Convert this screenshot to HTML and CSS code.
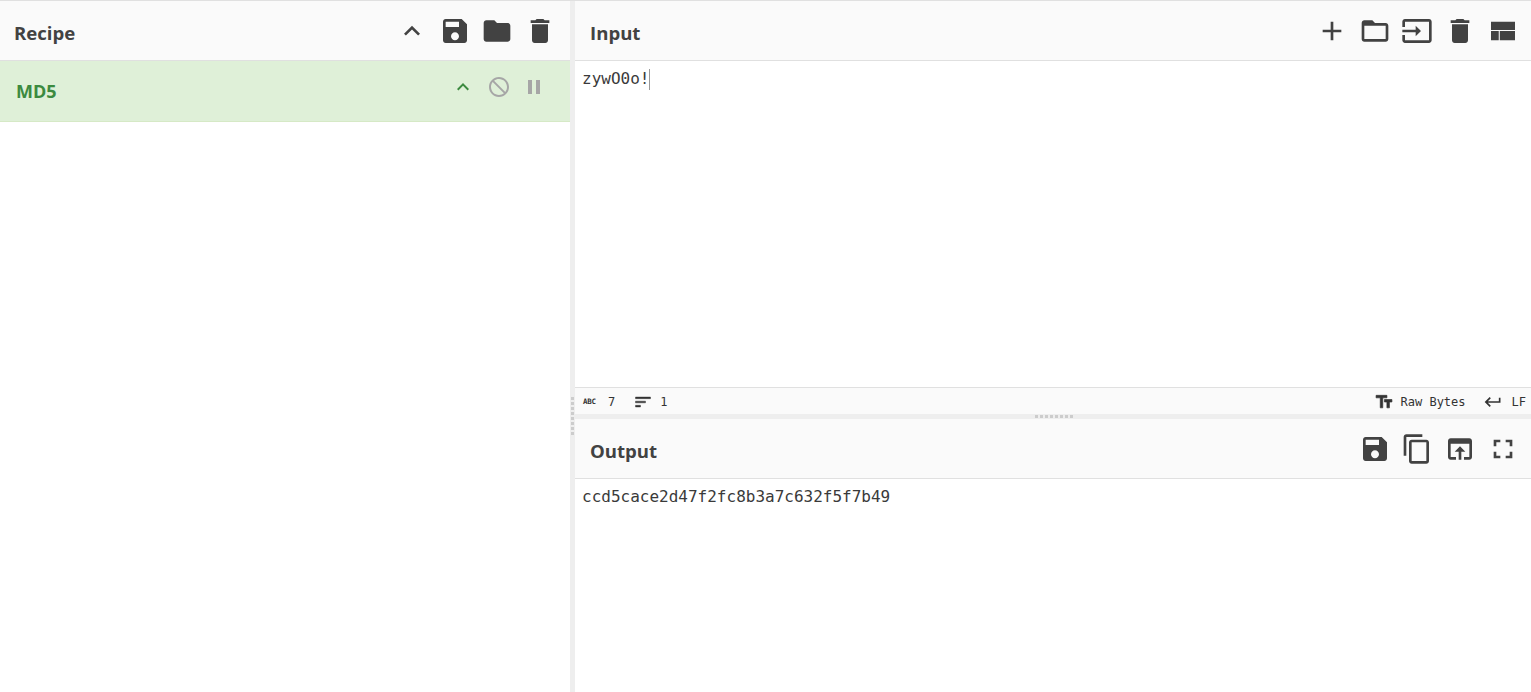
FILE: index.html
```html
<!DOCTYPE html>
<html lang="en">
<head>
<meta charset="utf-8">
<title>CyberChef</title>
<link rel="stylesheet" href="styles.css">
</head>
<body>
<div class="app">
  <section class="recipe">
    <header class="head">
      <h2 class="title">Recipe</h2>
      <div class="tools">
        <svg class="ic" viewBox="0 0 24 24"><path d="M12 8l-6 6 1.41 1.41L12 10.83l4.59 4.58L18 14z"/></svg>
        <svg class="ic" viewBox="0 0 24 24"><path d="M17 3H5c-1.11 0-2 .9-2 2v14c0 1.1.89 2 2 2h14c1.1 0 2-.9 2-2V7l-4-4zm-5 16c-1.66 0-3-1.34-3-3s1.34-3 3-3 3 1.34 3 3-1.34 3-3 3zm3-10H5V5h10v4z"/></svg>
        <svg class="ic" viewBox="0 0 24 24"><path d="M10 4H4c-1.1 0-1.99.9-1.99 2L2 18c0 1.1.9 2 2 2h16c1.1 0 2-.9 2-2V8c0-1.1-.9-2-2-2h-8l-2-2z"/></svg>
        <svg class="ic" viewBox="0 0 24 24"><path d="M6 19c0 1.1.9 2 2 2h8c1.1 0 2-.9 2-2V7H6v12zM19 4h-3.5l-1-1h-5l-1 1H5v2h14V4z"/></svg>
      </div>
    </header>
    <div class="op">
      <span class="op-name">MD5</span>
      <div class="op-tools">
        <svg class="ic-s green" viewBox="0 0 24 24"><path d="M12 8l-6 6 1.41 1.41L12 10.83l4.59 4.58L18 14z"/></svg>
        <svg class="ic-s grey" viewBox="0 0 24 24"><path d="M12 2C6.48 2 2 6.48 2 12s4.48 10 10 10 10-4.48 10-10S17.52 2 12 2zm0 18c-4.42 0-8-3.58-8-8 0-1.85.63-3.55 1.69-4.9L16.9 18.31C15.55 19.37 13.85 20 12 20zm6.31-3.1L7.1 5.69C8.45 4.63 10.15 4 12 4c4.42 0 8 3.58 8 8 0 1.85-.63 3.55-1.69 4.9z"/></svg>
        <svg class="ic-s grey" viewBox="0 0 24 24"><path d="M6 19h4V5H6v14zm8-14v14h4V5h-4z"/></svg>
      </div>
    </div>
  </section>

  <div class="gutter-v"><span class="grip-v"></span></div>

  <main class="io">
    <section class="input">
      <header class="head">
        <h2 class="title title-io">Input</h2>
        <div class="tools tools-io">
          <svg class="ic" viewBox="0 0 24 24"><path d="M19 13h-6v6h-2v-6H5v-2h6V5h2v6h6v2z"/></svg>
          <svg class="ic" viewBox="0 0 24 24"><path d="M20 6h-8l-2-2H4c-1.1 0-1.99.9-1.99 2L2 18c0 1.1.9 2 2 2h16c1.1 0 2-.9 2-2V8c0-1.1-.9-2-2-2zm0 12H4V8h16v10z"/></svg>
          <svg class="ic" viewBox="0 0 24 24"><path d="M21 3.01H3c-1.1 0-2 .9-2 2V9h2V4.99h18v14.03H3V15H1v4.01c0 1.1.9 1.98 2 1.98h18c1.1 0 2-.88 2-1.98v-14c0-1.11-.9-2-2-2zM11 16l4-4-4-4v3H1v2h10v3z"/></svg>
          <svg class="ic" viewBox="0 0 24 24"><path d="M6 19c0 1.1.9 2 2 2h8c1.1 0 2-.9 2-2V7H6v12zM19 4h-3.5l-1-1h-5l-1 1H5v2h14V4z"/></svg>
          <svg class="ic" viewBox="0 0 24 24"><path d="M3 5h18v6.250H3zM3 12h5.800v7H3zM9.600 12H21v7H9.600z"/></svg>
        </div>
      </header>
      <div class="editor editor-in"><span class="code">zywO0o!</span><span class="caret"></span></div>
      <footer class="status">
        <div class="status-group">
          <span class="abc">ABC</span><span class="stat stat-chars">7</span>
          <svg class="ic-t ic-sort" viewBox="0 0 24 24"><path d="M3 18h6v-2H3v2zM3 6v2h18V6H3zm0 7h12v-2H3v2z"/></svg><span class="stat">1</span>
        </div>
        <div class="status-group">
          <svg class="ic-t ic-tt" viewBox="0 0 24 24"><path d="M2.500 4v3h5v12h3V7h5V4h-13zm19 5h-9v3h3v7h3v-7h3V9z"/></svg><span class="stat stat-enc">Raw Bytes</span>
          <svg class="ic-t ic-ret" viewBox="0 0 24 24"><path d="M19 7v4H5.830l3.580-3.590L8 6l-6 6 6 6 1.410-1.410L5.830 13H21V7z"/></svg><span class="stat stat-eol">LF</span>
        </div>
      </footer>
    </section>

    <div class="gutter-h"><span class="grip-h"></span></div>

    <section class="output">
      <header class="head">
        <h2 class="title title-io">Output</h2>
        <div class="tools tools-io">
          <svg class="ic" viewBox="0 0 24 24"><path d="M17 3H5c-1.11 0-2 .9-2 2v14c0 1.1.89 2 2 2h14c1.1 0 2-.9 2-2V7l-4-4zm-5 16c-1.66 0-3-1.34-3-3s1.34-3 3-3 3 1.34 3 3-1.34 3-3 3zm3-10H5V5h10v4z"/></svg>
          <svg class="ic" viewBox="0 0 24 24"><path d="M16 1H4c-1.100 0-2 .9-2 2v14h2V3h12V1zm3 4H8c-1.100 0-2 .9-2 2v14c0 1.100.9 2 2 2h11c1.100 0 2-.9 2-2V7c0-1.100-.9-2-2-2zm0 16H8V7h11v14z"/></svg>
          <svg class="ic" viewBox="0 0 24 24"><path d="M19 4H5c-1.110 0-2 .9-2 2v12c0 1.100.89 2 2 2h4v-2H5V8h14v10h-4v2h4c1.100 0 2-.9 2-2V6c0-1.100-.89-2-2-2zm-7 6l-4 4h3v6h2v-6h3l-4-4z"/></svg>
          <svg class="ic" viewBox="0 0 24 24"><path d="M7 14H5v5h5v-2H7v-3zm-2-4h2V7h3V5H5v5zm12 7h-3v2h5v-5h-2v3zM14 5v2h3v3h2V5h-5z"/></svg>
        </div>
      </header>
      <div class="editor"><span class="code">ccd5cace2d47f2fc8b3a7c632f5f7b49</span></div>
    </section>
  </main>
</div>
</body>
</html>
```
FILE: styles.css
```css
* { box-sizing: border-box; }
html, body { margin: 0; height: 100%; overflow: hidden; background: #fff; }
.app {
  display: grid;
  grid-template-columns: 570px 5px 1fr;
  height: 692px;
  border-top: 1px solid #e0e0e0;
  font-family: "Open Sans", sans-serif;
  color: #424242;
}
.recipe { min-width: 0; }
.head {
  display: flex;
  align-items: center;
  justify-content: space-between;
  height: 60px;
  background: #fafafa;
  border-bottom: 1px solid #e0e0e0;
}
.title {
  margin: 6px 0 0 14px;
  font-size: 18.600px;
  font-weight: 700;
  line-height: 1;
  color: #424242;
}
.title-io { margin-left: 15px; }
.tools { display: flex; gap: 10.67px; padding-right: 14px; }
.tools-io { padding-right: 12.500px; }
.ic { width: 32px; height: 32px; fill: #424242; display: block; }
.op {
  display: flex;
  align-items: center;
  justify-content: space-between;
  height: 61px;
  padding: 0 24px 0 16px;
  background: #dff0d8;
  border-bottom: 1px solid #d6e9c6;
}
.op-name { font-size: 18px; font-weight: 700; color: #3c8a3f; }
.op-tools { display: flex; gap: 11.5px; margin-bottom: 8px; }
.ic-s { width: 24px; height: 24px; display: block; }
.green { fill: #3c8a3f; }
.grey { fill: #a6a6a6; }
.gutter-v { position: relative; background: #eee; }
.grip-v {
  position: absolute;
  left: 1px;
  top: 396px;
  width: 3px;
  height: 40px;
  background: repeating-linear-gradient(to bottom, #ccc 0 3px, transparent 3px 5px);
}
.io { display: flex; flex-direction: column; min-width: 0; }
.input { display: flex; flex-direction: column; height: 413px; }
.editor {
  display: flex;
  align-items: flex-start;
  padding: 8px 0 0 7px;
  font-family: "DejaVu Sans Mono", monospace;
  font-size: 16px;
  line-height: 20px;
  color: #3a3a3a;
}
.editor-in { flex: 1; }
.caret { width: 1px; height: 21px; background: #999; }
.status {
  display: flex;
  align-items: center;
  justify-content: space-between;
  height: 27px;
  padding: 1px 5px 0 8px;
  background: #fafafa;
  border-top: 1px solid #e0e0e0;
}
.status-group { display: flex; align-items: center; }
.abc {
  width: 15px;
  font-family: "DejaVu Sans Mono", monospace;
  font-size: 7.500px;
  font-weight: 700;
  letter-spacing: -.3px;
  color: #333;
}
.stat {
  font-family: "DejaVu Sans Mono", monospace;
  font-size: 12px;
  line-height: 1;
  color: #333;
}
.stat-chars { margin: 0 18px 0 10px; }
.ic-t { width: 20px; height: 20px; fill: #333; display: block; }
.ic-sort { margin-right: 7px; stroke: #333; stroke-width: .5px; }
.ic-tt { stroke: #333; stroke-width: .8px; }
.stat-enc { margin: 0 17px 0 7px; }
.ic-ret { margin-right: 9px; }
.gutter-h { position: relative; height: 5px; background: #eee; flex: none; }
.grip-h {
  position: absolute;
  left: 460px;
  top: 1px;
  width: 38px;
  height: 3px;
  background: repeating-linear-gradient(to right, #ccc 0 3px, transparent 3px 5px);
}
.output { flex: 1; min-height: 0; }
```
